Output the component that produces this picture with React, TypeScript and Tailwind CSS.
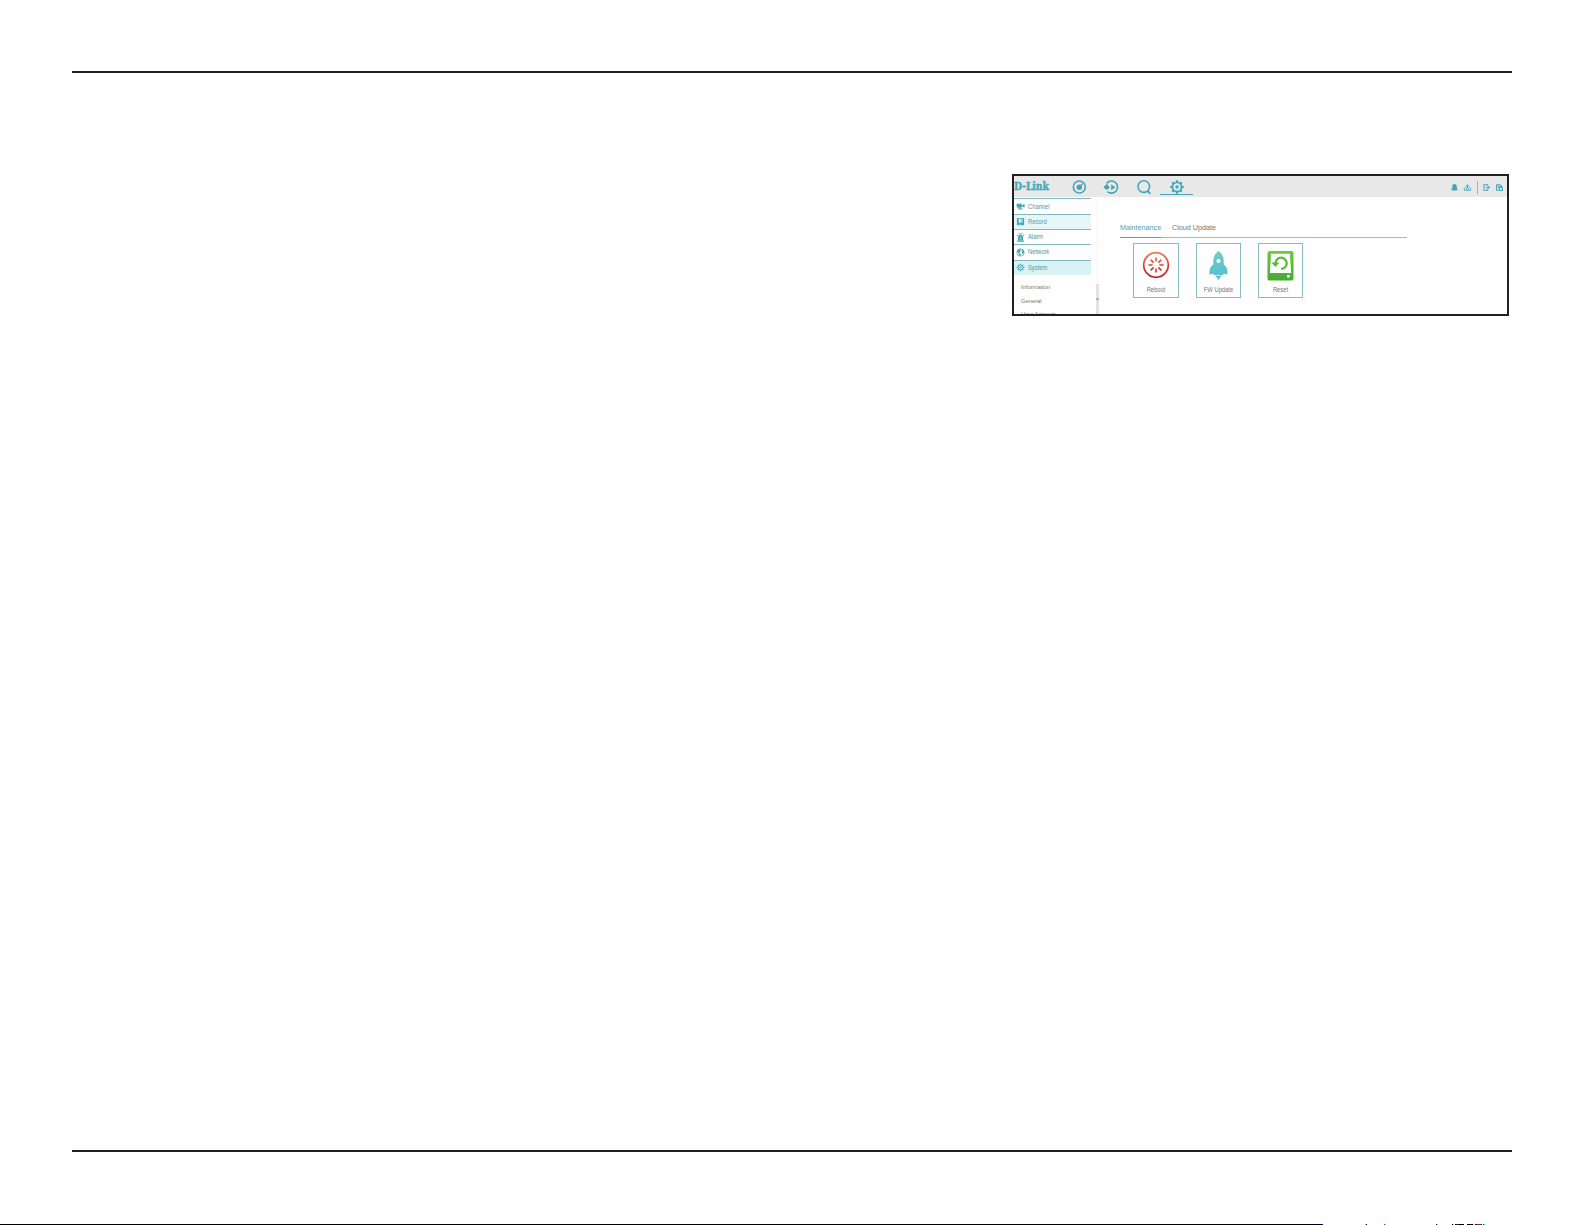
import type { ReactNode } from "react";

const TEAL = "#42a6b8";

/* Top bar icons, all drawn on a 16px grid */
function LiveIcon() {
  return (
    <svg viewBox="0 0 16 16" className="size-4" fill="none" stroke={TEAL} strokeWidth="1.6">
      <circle cx="8.3" cy="8" r="6" />
      <circle cx="8.3" cy="8.2" r="2.7" fill={TEAL} stroke="none" />
      <path d="M9.3 7l2.4-2.4" strokeWidth="1.2" />
    </svg>
  );
}

function PlaybackIcon() {
  return (
    <svg viewBox="0 0 16 16" className="size-4 overflow-visible" fill="none" stroke={TEAL} strokeWidth="1.6">
      <path d="M3.6 4.400A6.100 6.100 0 1 1 4.400 12.600" />
      <path d="M.4 8.400L3.800 4.800l3 3.600-3 2.600z" fill={TEAL} stroke="none" />
      <path d="M8.200 5.200l4.200 3-4.200 3z" fill={TEAL} stroke="none" />
    </svg>
  );
}

function SearchIcon() {
  return (
    <svg viewBox="0 0 16 16" className="size-4" fill="none" stroke={TEAL} strokeWidth="1.6">
      <circle cx="7.8" cy="7.6" r="5.8" />
      <path d="M11.4 11.8l2.9 2.9" strokeWidth="1.8" />
    </svg>
  );
}

function GearIcon({ className }: { className: string }) {
  return (
    <svg viewBox="0 0 16 16" className={className} fill="none" stroke={TEAL}>
      <circle cx="8" cy="8" r="4.5" strokeWidth="1.7" />
      <circle cx="8" cy="8" r="1.7" fill={TEAL} stroke="none" />
      <path
        d="M8 1.300v2M8 12.700v2M1.300 8h2M12.700 8h2M3.300 3.300l1.400 1.400M11.300 11.300l1.400 1.400M3.300 12.700l1.400-1.400M11.300 4.700l1.400-1.400"
        strokeWidth="2.3"
      />
    </svg>
  );
}

/* Sidebar icons, 10px grid */
function CameraIcon() {
  return (
    <svg viewBox="0 0 10 10" className="size-[9px]" fill={TEAL}>
      <path d="M.7 2h5.800v4.200H.7zM6.900 3.400L9.500 2.200v4L6.900 5.200zM3 6h2v1.200h2.400v1.200H2.600z" />
    </svg>
  );
}

function DiskIcon() {
  return (
    <svg viewBox="0 0 10 10" className="size-[9px]" fill={TEAL} fillRule="evenodd">
      <path d="M1 1h8v8.200H1zM3 2v4.200h4.200V2zM3.200 7.400v1h1.600v-1z" />
      <path d="M5.400 2.800h1v1.800h-1z" />
    </svg>
  );
}

function SirenIcon() {
  return (
    <svg viewBox="0 0 10 10" className="size-[9px]" fill={TEAL}>
      <path d="M2.200 8V4.800a2.800 2.800 0 0 1 5.600 0V8zM1.200 8.200h7.600v1.400H1.200zM2.600.6h4.800v.7H2.600zM.7 2.400l.6-.6 1 1-.6.6zM9.300 2.400l-.6-.6-1 1 .6.6z" />
      <path d="M4 5.200h2M4 6.600h2" stroke="#fff" strokeWidth=".6" />
    </svg>
  );
}

function GlobeIcon() {
  return (
    <svg viewBox="0 0 10 10" className="size-[9px]" fill={TEAL}>
      <circle cx="5" cy="5" r="4.1" fill="#fff" stroke={TEAL} strokeWidth=".8" />
      <path d="M1 4L2.800 1.600l2.800-.6-.8 1.600.8.8-1.400 1.400-.8.800L5.600 6.600 5 8.900 3.600 8.400 3 6.400zM6.400 1.400l2 1.400.7 2.600-1.800 1.400-.8-1.800.4-1.200z" />
    </svg>
  );
}

/* Right hand status icons, 8px grid */
function BellIcon() {
  return (
    <svg viewBox="0 0 8 8" className="size-[9px]" fill={TEAL}>
      <path d="M4 .9c1.600 0 2 1.200 2 2.400 0 1.400.2 1.800 1 2.600v.6H1v-.6c.8-.8 1-1.200 1-2.600C2 2.100 2.400.9 4 .9zM3.200 6.600h1.600v.6H3.200z" />
    </svg>
  );
}

function UploadIcon() {
  return (
    <svg viewBox="0 0 8 8" className="size-[9px]" fill="none" stroke={TEAL} strokeWidth=".8">
      <path d="M2.600 3.400L1.200 4.800v1.700h5.600V4.800L5.400 3.400M2.600 5.200h2.800M4 4.600V2.400" />
      <path d="M2.300 3.200L4 1l1.700 2.200z" fill={TEAL} stroke="none" />
    </svg>
  );
}

function LogoutIcon() {
  return (
    <svg viewBox="0 0 8 8" className="size-[9px]" fill="none" stroke={TEAL} strokeWidth=".9">
      <path d="M5 2.700V1.500H1.700v5H5V5.300M3.400 4h2.400" />
      <path d="M5.200 2.500L7.200 4 5.200 5.500z" fill={TEAL} stroke="none" />
    </svg>
  );
}

function DocIcon() {
  return (
    <svg viewBox="0 0 8 8" className="size-[9px]" fill="none" stroke={TEAL} strokeWidth=".9">
      <path d="M3 6.500H1.400v-5H4.400L6 3" />
      <path d="M3.700 4.300h2.900v2.400H3.700zM4.400 4.200V3.200h1.600v1M3 2v2" />
    </svg>
  );
}

/* Maintenance tiles */
function RebootIcon() {
  const rays = [0, 45, 90, 135, 180, 225, 270, 315];
  return (
    <svg viewBox="0 0 28 28" className="size-7" fill="none" stroke="url(#reboot)">
      <defs>
        <linearGradient id="reboot" gradientUnits="userSpaceOnUse" x1="0" y1="1" x2="0" y2="27">
          <stop offset="0" stopColor="#f2794f" />
          <stop offset=".55" stopColor="#d93a35" />
          <stop offset="1" stopColor="#b8202c" />
        </linearGradient>
      </defs>
      <circle cx="14" cy="14" r="12.3" strokeWidth="1.7" />
      {rays.map((a) => {
        const c = Math.cos((a * Math.PI) / 180);
        const s = Math.sin((a * Math.PI) / 180);
        return (
          <path
            key={a}
            d={`M${14 + 3.4 * c} ${14 + 3.4 * s}L${14.01 + 7.6 * c} ${14.01 + 7.6 * s}`}
            strokeWidth="1.6"
          />
        );
      })}
    </svg>
  );
}

function RocketIcon() {
  return (
    <svg viewBox="0.5 0 28 30" className="h-[30px] w-7">
      <defs>
        <linearGradient id="rocket" x1="0" y1="0" x2="0" y2="1">
          <stop offset="0" stopColor="#74cbc2" />
          <stop offset="1" stopColor="#56c0d2" />
        </linearGradient>
      </defs>
      <path
        fill="url(#rocket)"
        fillRule="evenodd"
        d="M14 0c3.400 2.500 5.200 6 5.200 9.700v3.600c2.200 1.700 3.800 4.300 3.800 6.900v3.400l-3.600-.9c-.6.700-1.400 1.300-2.300 1.600h-1.700l-1.400-.9-1.400.9h-1.700c-.9-.3-1.700-.9-2.300-1.600L5 23.600v-3.400c0-2.600 1.600-5.200 3.800-6.900V9.700C8.800 6 10.600 2.500 14 0zm0 7.900a2.100 2.100 0 1 0 0 4.200 2.100 2.100 0 0 0 0-4.200z"
      />
      <path fill="#56c0d2" d="M11 24.800l1.500-.4 1.500.7 1.500-.7 1.500.4-3 4.200z" />
    </svg>
  );
}

function ResetIcon() {
  return (
    <svg viewBox="0.5 0 28 30" className="h-[30px] w-7">
      <defs>
        <linearGradient id="reset" x1="0" y1="0" x2="0" y2="1">
          <stop offset="0" stopColor="#6ccb3c" />
          <stop offset="1" stopColor="#44ab30" />
        </linearGradient>
      </defs>
      <rect x="1" y="0" width="26" height="29.6" rx="2.2" fill="url(#reset)" />
      <path fill="#fff" d="M4.600 2.800h18.800l1.300 19.200H3.300z" />
      <rect x="20.6" y="24" width="2.6" height="2.4" rx=".5" fill="#fff" />
      <path d="M9 12a5.600 5.600 0 1 1 5.600 5.900" fill="none" stroke="#59bd35" strokeWidth="2.3" />
      <path fill="#59bd35" d="M4.800 11.600h8.200l-4 4.500z" />
    </svg>
  );
}

const menu: { label: string; icon: ReactNode; className: string }[] = [
  { label: "Channel", icon: <CameraIcon />, className: "h-4" },
  { label: "Record", icon: <DiskIcon />, className: "h-[15px] pb-px bg-[#e6f6f6]" },
  { label: "Alarm", icon: <SirenIcon />, className: "h-[15px]" },
  { label: "Network", icon: <GlobeIcon />, className: "h-4 pb-px" },
  { label: "System", icon: <GearIcon className="size-[9px]" />, className: "h-[15px] pb-px bg-[#d9f2f4]" },
];

const tiles = [
  { label: "Reboot", icon: <RebootIcon />, className: "w-[46px]" },
  { label: "FW Update", icon: <RocketIcon />, className: "w-[45px]" },
  { label: "Reset", icon: <ResetIcon />, className: "w-[45px]" },
];

function TopBar() {
  return (
    <header className="flex h-[21px] shrink-0 bg-[#e8e8e8]">
      <div className="w-12 pt-[2px]">
        <span className="block origin-left scale-y-115 font-['DejaVu_Serif',serif] text-[9.3px] leading-[18px] font-bold tracking-[-0.1px] text-[#42a9ba] [-webkit-text-stroke:0.35px_#42a9ba]">
          D-Link
        </span>
      </div>
      <nav className="flex">
        <div className="flex w-[33px] justify-center pt-[2.5px]"><LiveIcon /></div>
        <div className="flex w-8 justify-center pt-[2.5px]"><PlaybackIcon /></div>
        <div className="flex w-[33px] justify-center pt-[2.5px]"><SearchIcon /></div>
        <div className="flex h-[19px] w-[33px] justify-center border-b border-[#45a6b8] pt-[2.5px]">
          <GearIcon className="size-4" />
        </div>
      </nav>
      <div className="ml-auto flex items-center pt-[2px] pr-[3px]">
        <BellIcon />
        <span className="ml-1"><UploadIcon /></span>
        <span className="mr-1 ml-[5px] h-[13px] w-px bg-[#7dbdc6]" />
        <LogoutIcon />
        <span className="ml-1"><DocIcon /></span>
      </div>
    </header>
  );
}

function Sidebar() {
  return (
    <aside className="flex w-[77px] shrink-0 flex-col pt-px">
      {menu.map((m) => (
        <div
          key={m.label}
          className={`flex shrink-0 items-center border-t border-[#83b8bd] pl-[2px] text-[5.8px] text-[#4a9ba6] ${m.className}`}
        >
          {m.icon}
          <span className="ml-[3px] scale-y-110 leading-[8px]">{m.label}</span>
        </div>
      ))}
      <ul className="mt-[6px] pl-[7px] text-[5.8px] leading-[13px] text-[#777]">
        <li className="h-[13.5px]">Information</li>
        <li className="h-[13.5px]">General</li>
        <li className="h-[13.5px]">User Account</li>
      </ul>
    </aside>
  );
}

function Maintenance() {
  return (
    <main className="w-[287px] pt-[24px]">
      <div className="flex h-[17px] border-b border-[#8fc1c5] text-[7.2px] leading-[14px]">
        <span className="h-[17px] w-[41px] border-b border-[#45a6b8] whitespace-nowrap text-[#45a6b8]">Maintenance</span>
        <span className="ml-[11px] text-[#777]">Cloud Update</span>
      </div>
      <div className="mt-[5px] flex gap-[17px] pl-[13px]">
        {tiles.map((t) => (
          <div
            key={t.label}
            className={`flex h-[55px] flex-col items-center border border-[#88bcc2] pt-[7px] ${t.className}`}
          >
            <div className="h-[30px]">{t.icon}</div>
            <span className="mt-[4px] scale-y-110 text-[5.8px] leading-[10px] whitespace-nowrap text-[#777]">
              {t.label}
            </span>
          </div>
        ))}
      </div>
    </main>
  );
}

/* Clipped leftovers along the page's lower edge */
function BottomEdge() {
  return (
    <div className="flex h-px">
      <span className="w-[1322px] bg-black" />
      <span className="w-px bg-[#0000ff]" />
      <span className="ml-[42px] w-px bg-[#ffb000]" />
      <span className="w-px bg-[#000090]" />
      <span className="ml-[17px] w-px bg-[#804040]" />
      <span className="w-px bg-[#00ffff]" />
      <span className="ml-[50px] w-px bg-[#202020]" />
      <span className="w-px bg-[#00ffff]" />
      <span className="ml-[14px] w-px bg-black" />
      <span className="w-px bg-[#00ffff]" />
      <span className="ml-px w-[2px] bg-black" />
      <span className="w-px bg-[#00a000]" />
      <span className="w-[6px] bg-black" />
      <span className="ml-[3px] w-[6px] bg-black" />
      <span className="w-px bg-[#00ffff]" />
      <span className="ml-px w-[2px] bg-[#600000]" />
      <span className="w-px bg-[#008000]" />
      <span className="w-[2px] bg-[#902000]" />
      <span className="w-px bg-[#008000]" />
      <span className="w-px bg-[#0000c0]" />
      <span className="ml-px w-px bg-[#702050]" />
      <span className="w-px bg-[#00ffff]" />
    </div>
  );
}

export default function App() {
  return (
    <div className="flex h-[1225px] w-[1585px] flex-col bg-white pt-[71px] font-['Liberation_Sans',sans-serif]">
      <div className="mx-[72px] h-[2px] w-[1440px] shrink-0 bg-[#231f20]" />

      <section className="mt-[101px] ml-[1012px] flex h-[142px] w-[497px] shrink-0 flex-col overflow-hidden border-2 border-[#231f20] bg-[#fefefe]">
        <TopBar />
        <div className="flex h-[117px] overflow-hidden">
          <Sidebar />
          <div className="ml-[5px] flex w-[3px] shrink-0 flex-col bg-[#fafafa]">
            <div className="mt-auto flex h-[30px] items-center justify-center bg-[#e2e2e2] text-[6px] text-[#555]">&lt;</div>
          </div>
          <div className="w-[21px] shrink-0" />
          <Maintenance />
        </div>
      </section>

      <div className="mt-auto mb-[72px] ml-[72px] h-[2px] w-[1440px] shrink-0 bg-[#231f20]" />
      <BottomEdge />
    </div>
  );
}
